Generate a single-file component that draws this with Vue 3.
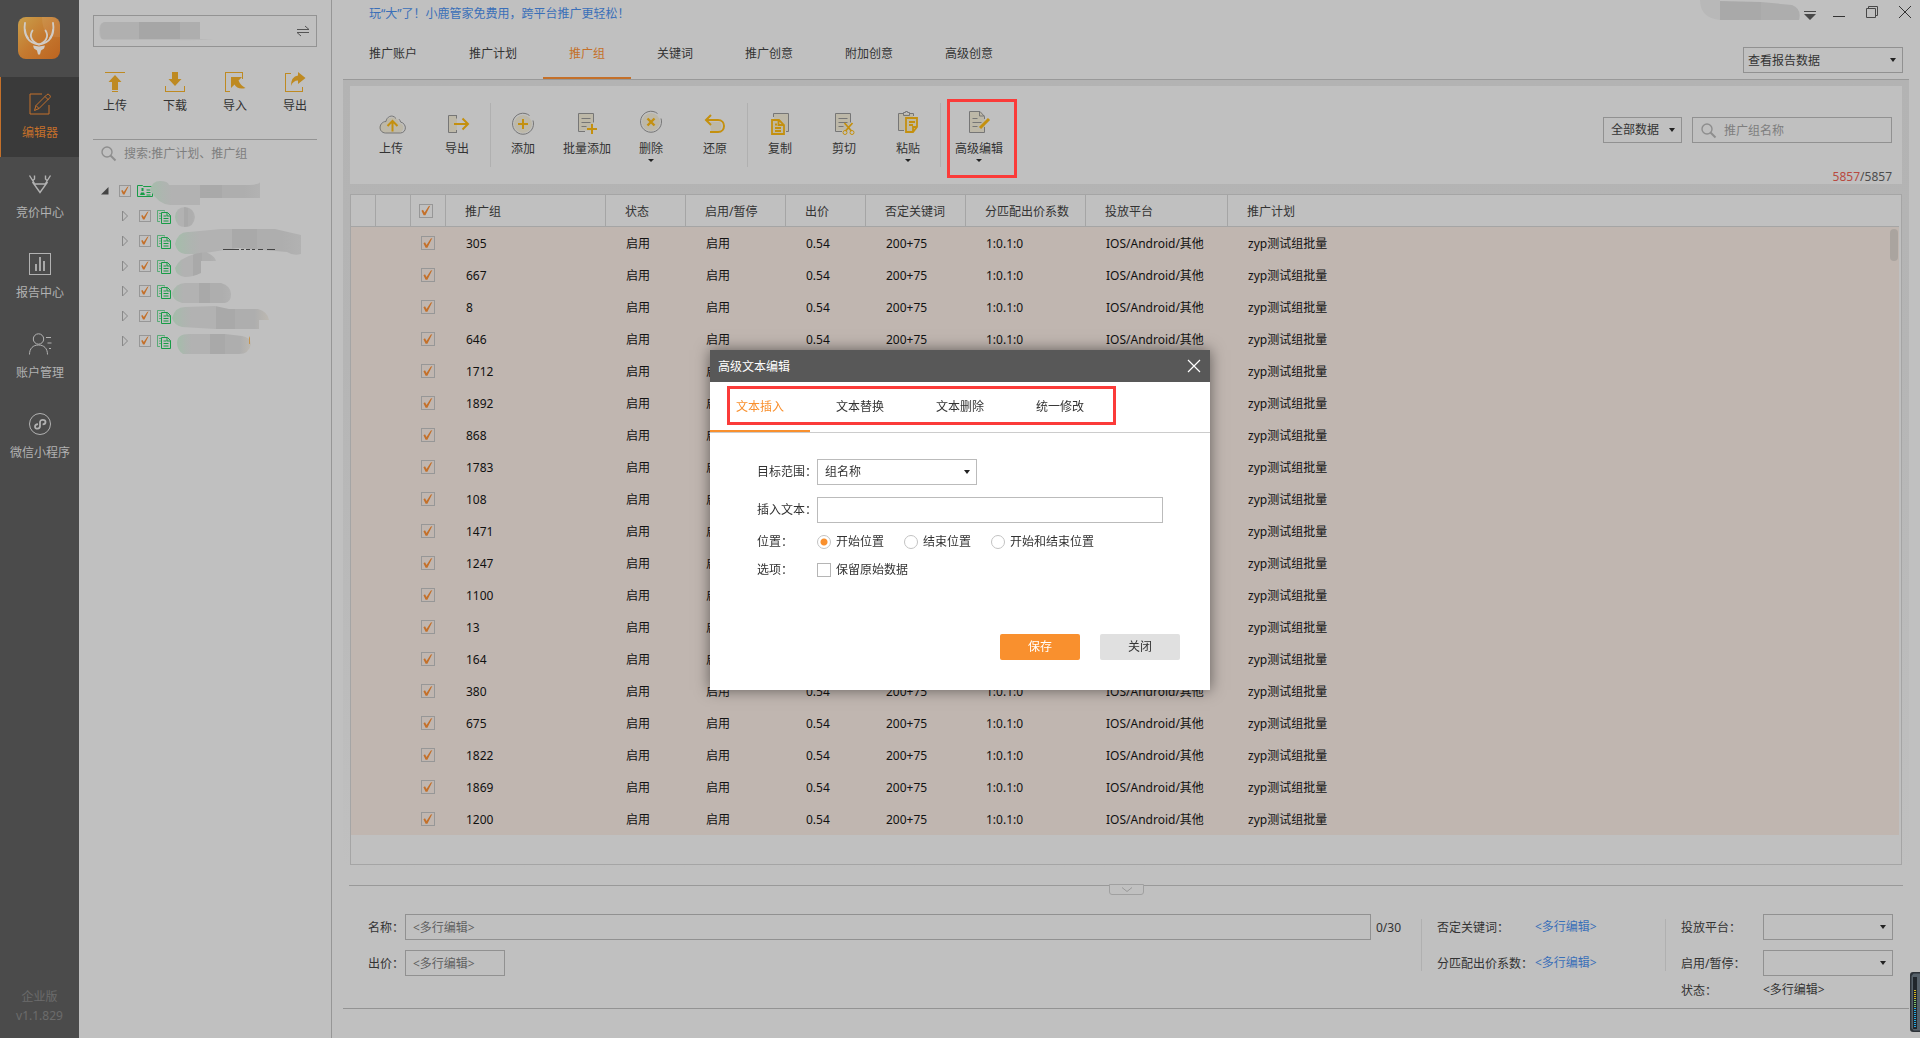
<script setup>
import { ref } from 'vue'

const railItems = [
  { label: '编辑器', active: true, icon: '<path d="M14 2H2v20h19v-9"/><path d="M6.500 18.500l1.500-5L19 2.500q1-1 2.500 0.500t0.500 2.500L11 16.500z M17 4.500l3.500 3.500 M8 13.500l3 3"/>' },
  { label: '竞价中心', icon: '<path d="M4.500 10L12 20.500 19.500 10M6.500 12h11M1.500 3.500L6.500 11.500M6.500 3.500v3.500l-2 2M22.500 3.500L17.500 11.500M17.500 3.500v3.500l2 2" stroke-width="1.400"/>' },
  { label: '报告中心', icon: '<rect x="1.500" y="1.500" width="21" height="21"/><path d="M8 19v-7M12 19V5M16 19V9" stroke-width="1.800"/>' },
  { label: '账户管理', icon: '<circle cx="10.500" cy="7" r="5.200"/><path d="M1.500 22.500c0-6 3.500-9.500 9-9.500s9 3.500 9 9.500M18 5.500h5M19.500 11h4M21 16.500h2"/>' },
  { label: '微信小程序', icon: '<circle cx="12" cy="12" r="10.500"/><path d="M10 12.200c-2 .2-3 1.200-3 2.500 0 2.700 5 2.900 5-.7V10.300c0-3.600 5.500-3 5.500-.3 0 1.500-1.200 2.300-2.900 2.300" stroke-width="1.800"/>' }
]

const sideActions = [
  { label: '上传', icon: '<path d="M2 0h20v1H2zM12 3l6.500 7H15v8H9v-8H5.500zM9 19h6v1H9z"/>' },
  { label: '下载', icon: '<path d="M9 0h6v7h3.500L12 14 5.500 7H9zM2 14h1v5h18v-5h1v6H2z"/>' },
  { label: '导入', icon: '<path d="M2 0h18v7h-1V1H3v18h4v1H2zM8 5h11l-3.500 3.500q2 5 7 7.500-8 2-11-3.500L8 16z"/>' },
  { label: '导出', icon: '<path d="M2 1h6v1H3v17h16v-4h1v5H2zM15 0l7.500 6L15 12V8.500q-5 0-7 5.500 0-9.500 7-10.500z"/>' }
]

const tabs = ['推广账户', '推广计划', '推广组', '关键词', '推广创意', '附加创意', '高级创意']

const paper = '<path d="M5 2.500h15v17H5z" fill="#bdb8a8" stroke="none"/><path d="M12 20.500H5.500V2.500h15v9M8.500 7.500h9M8.500 11.500h9M8.500 15.500h5"/>'
const toolGroups = [
  [
    { label: '上传', icon: '<path d="M9 22c-9-1-8-10-1-11 2-6 13-6 14 1 7 1 5 10-1 10z" fill="#bdb8a8" stroke="none"/><path d="M19 7.500C15 2.500 9.500 6 9 10.500c-7 0-8.500 11-.5 11.500h15c6.500-.5 6.500-9.500 0-11-.2-1.200-.7-2-1.500-2.800"/><path class="gold" d="M15.500 20.500V10M10.500 15l5-5 5 5" stroke-width="2"/>' },
    { label: '导出', icon: '<path d="M6 5h8v16H6z" fill="#bdb8a8" stroke="none"/><path d="M14 4.500H5.500v17H14M13.500 4.500v3M13.500 19v2.500"/><path class="gold" d="M11 13h14M19.500 7.500L25 13l-5.500 5.500" stroke-width="2"/>' }
  ],
  [
    { label: '添加', icon: '<circle cx="14" cy="13" r="9" fill="#bdb8a8" stroke="none"/><path d="M20.500 4.500A10.500 10.500 0 1 0 24 9.500"/><path class="gold" d="M9 13h10M14 8v10" stroke-width="2"/>' },
    { label: '批量添加', icon: paper + '<path class="gold" d="M14 18h10M19 13v10" stroke-width="2"/>' },
    { label: '删除', caret: true, icon: '<circle cx="14" cy="11" r="9" fill="#bdb8a8" stroke="none"/><path d="M20.500 2.500A10.500 10.500 0 1 0 24 7.500"/><path class="gold" d="M10.500 7.500l7 7M17.500 7.500l-7 7" stroke-width="2.400"/>' },
    { label: '还原', icon: '<path d="M9 11h10q3 3 0 9h-9z" fill="#bdb8a8" stroke="none"/><path class="gold" d="M10 4L5 9l5 5M5.500 9H17c8 0 8 12 0 12H9" stroke-width="2"/>' }
  ],
  [
    { label: '复制', icon: '<path d="M8 3h14v17H8z" fill="#bdb8a8" stroke="none"/><path d="M7.500 6V2.500h15v18H20"/><path class="gold" d="M6 9h7l5 5v9H6zM12.500 9v5H18M9 13.500h2M9 17h6M9 20h6" stroke-width="1.800" fill="#c0b9a0"/>' },
    { label: '剪切', icon: paper + '<path class="gold" d="M14.500 12l7 8M22.500 12l-7 8" stroke-width="1.800"/><circle class="gold" cx="15" cy="21.500" r="2"/><circle class="gold" cx="22" cy="21.500" r="2"/>' },
    { label: '粘贴', caret: true, icon: '<path d="M5 3h14v16H5z" fill="#bdb8a8" stroke="none"/><path d="M10 19.500H4.500v-17H9M15 2.500h4.500V5M9.500 1.500h2v-1h2v1h2v3h-6z"/><path class="gold" d="M12 7h11v9l-4 5h-7zM15 11h6M15 14h4M19 20v-4h4" stroke-width="1.800" fill="#c0b9a0"/>' }
  ],
  [
    { label: '高级编辑', caret: true, marked: true, icon: '<path d="M4 1h12l4 5v15H4z" fill="#bdb8a8" stroke="none"/><path d="M19.500 16v5.500h-15v-21H15l4.500 5V8M14.500.5V5h5M7.500 7.500h5M7.500 11.500h9M7.500 15.500h5"/><path class="gold" d="M15 17l9-9" stroke-width="3"/>' }
  ]
]

// Masked names in the account tree, drawn as blocks
const tree = [
  { d: 'M0 8q2-9 10-9 8 0 9 4h81q10-1 10-3v16H50v7H20q-12-1-20-15z', w: 112 },
  { d: 'M0 10q1-10 10-10 9 1 10 10-1 10-10 10Q1 20 0 10z', w: 22 },
  { d: 'M0 12Q3-1 14 0L46-3h54l26 6v19q-8 2-14-2l-50-4-38 6H10Q2 21 0 12z', w: 127 },
  { d: 'M0 11Q5-2 31-5q9 4 10 9H26v12q-8 4-16 4Q1 19 0 11z', w: 42 },
  { d: 'M-3 11Q1 1 10 1h36q10 3 10 11t-6 9H7q-10-3-10-10z', w: 57 },
  { d: 'M-3 11Q0 0 10 0l30-1 14 3h29q10 3 11 11H84v9H40L7 20Q-1 18-3 11z', w: 95 },
  { d: 'M2 11Q2 2 14 2h36l17 2q8 1 9 8-2 10-12 10H8Q2 18 2 11z', w: 78 }
]

const headers = ['推广组', '状态', '启用/暂停', '出价', '否定关键词', '分匹配出价系数', '投放平台', '推广计划']
const widths = [25, 35, 35, 160, 80, 100, 80, 100, 120, 142]
const names = ['305', '667', '8', '646', '1712', '1892', '868', '1783', '108', '1471', '1247', '1100', '13', '164', '380', '675', '1822', '1869', '1200']
const rest = ['启用', '启用', '0.54', '200+75', '1:0.1:0', 'IOS/Android/其他', 'zyp测试组批量']

const modalTabs = ['文本插入', '文本替换', '文本删除', '统一修改']
const positions = ['开始位置', '结束位置', '开始和结束位置']
const position = ref('开始位置')
const keyword = ref('')
const treeKeyword = ref('')
const insertText = ref('')
const groupName = ref('')
const bid = ref('')
</script>

<template>
  <div class="app">
    <nav class="rail">
      <svg class="logo" viewBox="0 0 42 42" width="42" height="42" aria-hidden="true">
        <defs>
          <linearGradient id="logoFill" x1="0" y1="0" x2="1" y2="1">
            <stop offset="0" stop-color="#c9a04c" />
            <stop offset=".5" stop-color="#c57a30" />
            <stop offset="1" stop-color="#bc6420" />
          </linearGradient>
        </defs>
        <rect width="42" height="42" rx="8" fill="url(#logoFill)" />
        <path d="M24 0h10q8 0 8 8v12Q24 22 24 0z" fill="#fff" opacity=".08" />
        <g fill="none" stroke="#d0cbc5" stroke-width="1.800" stroke-linecap="round">
          <path d="M7 6C5 18 10 26 21 27.500 32 26 37 18 35 6" />
          <path d="M14.500 13.500c-4 6 0 12 6.500 14 6.500-2 10.500-8 6.500-14" />
          <path d="M7 13q0 4 3 8M35 13q0 4-3 8" />
        </g>
        <path d="M15 28.500l6 1 6-1-1 3-3 2-1 4h-2l-1-4-3-2z" fill="#d0cbc5" />
      </svg>
      <a v-for="item in railItems" :key="item.label" href="#" class="rail-item" :class="{ active: item.active }">
        <svg width="24" height="24" viewBox="0 0 24 24" fill="none" stroke="currentColor" v-html="item.icon"></svg>
        <span>{{ item.label }}</span>
      </a>
      <div class="version"><span>企业版</span><span>v1.1.829</span></div>
    </nav>

    <aside class="side">
      <button class="account" type="button" aria-label="切换账户">
        <svg width="116" height="20" viewBox="0 0 116 20">
          <path d="M0 10q0-8 5-9h96v17h14q-20 2-40 1H5q-5-1-5-9z" fill="#b8b8b8" />
          <path d="M1 8q0-6 5-7h34v17H3q-2-2-2-10z" fill="#b0b0b0" /><path d="M40 1h41v17H40z" fill="#a6a6a6" /><path d="M81 1h20v17H81z" fill="#aeaeae" />
        </svg>
        <svg width="14" height="12" viewBox="0 0 14 12" fill="none" stroke="#555"><path d="M1 4.500h12L9 1M13 7.500H1L5 11" /></svg>
      </button>
      <div class="side-actions">
        <button v-for="a in sideActions" :key="a.label" type="button">
          <svg width="24" height="20" viewBox="0 0 24 20" fill="#be8a22" v-html="a.icon"></svg>
          <span>{{ a.label }}</span>
        </button>
      </div>
      <label class="side-search">
        <svg width="15" height="15" viewBox="0 0 15 15" fill="none" stroke="#8e8e8e" stroke-width="1.400"><circle cx="6" cy="6" r="5" /><path d="M9.500 9.500l5 5" stroke-width="2" /></svg>
        <input v-model="treeKeyword" type="text" placeholder="搜索:推广计划、推广组" aria-label="搜索" />
      </label>
      <ul class="tree">
        <li v-for="(n, i) in tree" :key="i" :class="{ root: i === 0 }">
          <svg v-if="i === 0" class="twisty" width="8" height="8" viewBox="0 0 8 8"><path d="M7.500 0v7.500H0z" fill="#444" /></svg>
          <svg v-else class="twisty" width="8" height="12" viewBox="0 0 8 12"><path d="M1.500 1v10L6.500 6z" fill="none" stroke="#888" /></svg>
          <input class="check small" type="checkbox" checked aria-label="选择" />
          <svg v-if="i === 0" class="node" width="16" height="14" viewBox="0 0 16 14" fill="none" stroke="#169c46"><path d="M.5 1.500h5l1 1h9v10H.5z" /><path d="M9.500 6h4M9.500 8.500h4M9.500 11h4" /><path d="M3 11h5L7 8.500H4zM4.500 4h2v3h-2z" fill="#169c46" stroke="none" /></svg>
          <svg v-else class="node" width="14" height="14" viewBox="0 0 14 14" fill="none" stroke="#169c46"><path d="M3 11.500H.5V.5h7v1M2 3.500h2M2 6h2M2 8.500h2" opacity=".6" /><path d="M4.500 2.500h6l3 3v8h-9zM6.500 6h3M6.500 8.500h5M6.500 11h5" /><path d="M10 2.500v3.500h3.500" /></svg>
          <svg class="mask" :width="n.w" height="20" :viewBox="`0 0 ${n.w} 20`">
            <defs>
              <linearGradient :id="'mask' + i" x1="0" x2="1">
                <stop offset="0" stop-color="#a4bdaa" /><stop offset=".12" stop-color="#aeb5b0" />
                <stop offset=".2" stop-color="#b2b2b2" /><stop offset=".45" stop-color="#b2b2b2" />
                <stop offset=".45" stop-color="#a9a9a9" /><stop offset=".65" stop-color="#a9a9a9" />
                <stop offset=".65" stop-color="#aeaeae" /><stop offset=".85" stop-color="#aeaeae" />
                <stop offset="1" :stop-color="i > 4 ? '#bdb9b2' : '#b2b2b2'" />
              </linearGradient>
            </defs>
            <path :d="n.d" :fill="`url(#mask${i})`" />
            <path v-if="i === 6" d="M74 4l1 2v6h-1z" fill="#c4924c" />
            <path v-if="i === 2" d="M48 17.500h16M66 17.500h3M71 17.500h4M77 17.500h3M83 17.500h5M92 17.500h8" stroke="#444" fill="none" />
          </svg>
        </li>
      </ul>
    </aside>

    <main class="main">
      <div class="titlebar">
        <a href="#" class="promo">玩“大”了！小鹿管家免费用，跨平台推广更轻松！</a>
        <svg class="user" width="101" height="20" viewBox="0 0 101 20"><path d="M0 0h20v20Q0 18 0 0z" fill="#b8b8b8" /><path d="M20 1l41 1v18H20z" fill="#a9a9a9" /><path d="M61 2l31 3q10 4 7 15H61z" fill="#adadad" /></svg>
        <div class="window-buttons">
          <button type="button" aria-label="菜单"><svg width="12" height="14" viewBox="0 0 12 14"><path d="M0 6h12v1H0zM0 9h12l-6 6z" fill="#484848" /></svg></button>
          <button type="button" aria-label="最小化"><svg width="12" height="14" viewBox="0 0 12 14"><path d="M0 11h12v1H0z" fill="#333" /></svg></button>
          <button type="button" aria-label="还原窗口"><svg width="12" height="14" viewBox="0 0 12 14" fill="none" stroke="#484848"><path d="M.5 3.500h9v9h-9zM2.500 3V1.500h9v9H10" /></svg></button>
          <button type="button" aria-label="关闭窗口"><svg width="12" height="14" viewBox="0 0 12 14" stroke="#333"><path d="M0 1l12 12M12 1L0 13" /></svg></button>
        </div>
      </div>

      <div class="tabs">
        <a v-for="t in tabs" :key="t" href="#" :class="{ active: t === '推广组' }">{{ t }}</a>
        <span class="select report">
          <select aria-label="报告数据"><option>查看报告数据</option></select>
          <i></i>
        </span>
      </div>

      <div class="workspace">
        <section class="toolbar">
          <div v-for="(g, gi) in toolGroups" :key="gi" class="group">
            <button v-for="t in g" :key="t.label" type="button" :class="{ marked: t.marked }">
              <svg class="tool-icon" width="28" height="24" viewBox="0 0 28 24" fill="none" stroke="#767676" v-html="t.icon"></svg>
              <span>{{ t.label }}</span>
              <i v-if="t.caret" class="caret"></i>
            </button>
          </div>
          <div class="filters">
            <div class="filter-row">
              <span class="select scope"><select aria-label="数据范围"><option>全部数据</option></select><i></i></span>
              <label class="find">
                <svg width="15" height="15" viewBox="0 0 15 15" fill="none" stroke="#8e8e8e" stroke-width="1.400"><circle cx="6" cy="6" r="5" /><path d="M9.500 9.500l5 5" stroke-width="2" /></svg>
                <input v-model="keyword" type="text" placeholder="推广组名称" aria-label="推广组名称" />
              </label>
            </div>
            <p class="count"><b>5857</b>/5857</p>
          </div>
        </section>

        <section class="grid">
          <table>
            <colgroup>
              <col v-for="(w, i) in widths" :key="i" :style="{ width: w + 'px' }" />
              <col />
            </colgroup>
            <thead>
              <tr>
                <th></th><th></th>
                <th class="tick"><input class="check" type="checkbox" checked aria-label="全选" /></th>
                <th v-for="h in headers" :key="h">{{ h }}</th>
              </tr>
            </thead>
            <tbody>
              <tr v-for="n in names" :key="n">
                <td></td><td></td>
                <td class="tick"><input class="check" type="checkbox" checked :aria-label="'选择 ' + n" /></td>
                <td>{{ n }}</td>
                <td v-for="(c, i) in rest" :key="i">{{ c }}</td>
              </tr>
            </tbody>
          </table>
          <span class="thumb"></span>
        </section>

        <section class="detail">
          <button class="fold" type="button" aria-label="收起"><svg width="12" height="6" viewBox="0 0 12 6" fill="none" stroke="#999"><path d="M1 .5l5 4 5-4" /></svg></button>
          <div class="fields grow">
            <div class="row"><label for="gname">名称：</label><input id="gname" v-model="groupName" class="box wide" type="text" placeholder="&lt;多行编辑&gt;" /><span class="len">0/30</span></div>
            <div class="row"><label for="bid">出价：</label><input id="bid" v-model="bid" class="box bid" type="text" placeholder="&lt;多行编辑&gt;" /></div>
          </div>
          <div class="sep"></div>
          <div class="fields mid">
            <div class="row"><span class="name">否定关键词：</span><a href="#">&lt;多行编辑&gt;</a></div>
            <div class="row"><span class="name">分匹配出价系数：</span><a href="#">&lt;多行编辑&gt;</a></div>
          </div>
          <div class="sep"></div>
          <div class="fields last">
            <div class="row"><label for="plat" class="name">投放平台：</label><span class="select"><select id="plat"><option></option></select><i></i></span></div>
            <div class="row"><label for="onoff" class="name">启用/暂停：</label><span class="select"><select id="onoff"><option></option></select><i></i></span></div>
            <div class="row state"><span class="name">状态：</span><span>&lt;多行编辑&gt;</span></div>
          </div>
        </section>
      </div>
      <footer class="foot"></footer>
    </main>

    <svg class="meter" width="10" height="60" viewBox="0 0 10 60" aria-hidden="true">
      <path d="M10 0H3Q0 0 0 3v54q0 3 3 3h7z" fill="#2c3238" /><path d="M10 1.500H3.500L1.500 4v52l2 2.500H10z" fill="#56616a" />
      <rect x="3" y="5" width="4" height="52" fill="#20262c" />
      <path d="M5 18v10" stroke="#d8b820" stroke-width="2" stroke-dasharray="1 1" />
      <path d="M5 28v7" stroke="#7fc26a" stroke-width="2" stroke-dasharray="1 1" />
      <path d="M5 36v20" stroke="#28a8e0" stroke-width="2" stroke-dasharray="1 1" />
    </svg>

    <div class="overlay">
      <form class="modal" role="dialog" aria-label="高级文本编辑" @submit.prevent>
        <header>
          <h2>高级文本编辑</h2>
          <button type="button" aria-label="关闭对话框"><svg width="14" height="14" viewBox="0 0 14 14" stroke="#fff" stroke-width="1.200"><path d="M1 1l12 12M13 1L1 13" /></svg></button>
        </header>
        <div class="modal-tabs">
          <a v-for="(t, i) in modalTabs" :key="t" href="#" :class="{ active: i === 0 }">{{ t }}</a>
          <span class="frame"></span>
        </div>
        <div class="modal-body">
          <div class="line"><label for="target">目标范围：</label><span class="select"><select id="target"><option>组名称</option></select><i></i></span></div>
          <div class="line"><label for="ins">插入文本：</label><input id="ins" v-model="insertText" class="text" type="text" /></div>
          <div class="line short">
            <span class="cap">位置：</span>
            <label v-for="p in positions" :key="p" class="opt"><input v-model="position" type="radio" name="pos" :value="p" />{{ p }}</label>
          </div>
          <div class="line short"><span class="cap">选项：</span><label class="opt"><input class="check" type="checkbox" />保留原始数据</label></div>
        </div>
        <div class="modal-foot"><button class="save" type="submit">保存</button><button class="close" type="button">关闭</button></div>
      </form>
    </div>
  </div>
</template>

<style>
body { background: #c0c0c0; }
.gold { stroke: #c4900f; }
</style>

<style scoped>
.app, .app * { box-sizing: border-box; }
.app {
  display: flex;
  min-height: 100vh;
  background: #c0c0c0;
  color: #333;
  font: 12px/16px "Noto Sans", "Noto Sans CJK SC", sans-serif;
}
button, input, select { font: inherit; color: inherit; margin: 0; }
button { border: 0; padding: 0; background: none; }
input[type="text"] { border: 0; padding: 0; background: none; outline: 0; min-width: 0; }
input::placeholder { color: #7e7e7e; opacity: 1; }
a { text-decoration: none; color: inherit; }
svg { display: block; flex: none; overflow: visible; }

/* check marks and drop-downs */
.check {
  appearance: none;
  display: block;
  flex: none;
  width: 14px;
  height: 14px;
  border: 1px solid #979797;
}
.check:checked::before {
  content: "";
  display: block;
  width: 12px;
  height: 12px;
  background: #c4702a;
  clip-path: polygon(12% 52%, 25% 44%, 38% 66%, 72% 14%, 86% 8%, 45% 90%, 30% 90%);
}
.check.small { width: 12px; height: 12px; }
.check.small:checked::before { width: 10px; height: 10px; }
.select { position: relative; display: block; height: 26px; flex: none; }
.select select {
  appearance: none;
  display: block;
  width: 100%;
  height: 100%;
  padding: 1px 4px 0;
  border: 1px solid #919191;
  border-radius: 0;
  background: none;
}
.select i {
  position: absolute;
  right: 7px;
  top: 11px;
  border: 3px solid transparent;
  border-top: 4px solid #222;
  border-bottom: 0;
  pointer-events: none;
}

/* left rail */
.rail {
  width: 79px;
  flex: none;
  display: flex;
  flex-direction: column;
  background: #4b4b4b;
  color: #b2b2b2;
}
.logo { margin: 17px 18px 18px; }
.rail-item {
  height: 80px;
  padding-top: 15px;
  display: flex;
  flex-direction: column;
  align-items: center;
  gap: 9px;
  border-left: 1px solid transparent;
}
.rail-item.active { background: #3a3a3a; color: #c4702a; border-color: #c4702a; }
.version {
  margin-top: auto;
  padding-bottom: 14px;
  display: flex;
  flex-direction: column;
  align-items: center;
  gap: 3px;
  color: #6c6c6c;
}

/* account side bar */
.side { width: 253px; flex: none; padding: 15px 14px 0; border-right: 1px solid #969696; }
.account {
  width: 100%;
  height: 32px;
  padding: 0 6px 0 5px;
  display: flex;
  align-items: center;
  justify-content: space-between;
  border: 1px solid #939393;
}
.side-actions {
  display: flex;
  justify-content: space-between;
  padding: 25px 10px;
  border-bottom: 1px solid #939393;
}
.side-actions button { display: flex; flex-direction: column; align-items: center; gap: 6px; }
.side-search { display: flex; align-items: center; gap: 8px; height: 27px; padding-left: 8px; }
.side-search input { flex: 1; }
.tree { list-style: none; margin: 11px 0 0; padding: 0; }
.tree li { display: flex; align-items: center; height: 25px; padding-left: 28px; }
.tree li.root { padding-left: 8px; }
.twisty { width: 8px; margin-right: 10px; }
.node { margin: 2px 4px 0 6px; }
.root .node { margin: 0 -3px 0 6px; }
.mask { margin-top: 2px; }

/* main column */
.main { flex: 1; min-width: 0; display: flex; flex-direction: column; }
.titlebar { display: flex; align-items: flex-start; height: 26px; padding: 0 9px 0 37px; }
.promo { flex: 1; padding-top: 6px; color: #3a6fb8; }
.window-buttons { display: flex; gap: 21px; padding: 5px 0 0 3px; }
.window-buttons button:first-child { margin-right: -4px; }
.tabs {
  display: flex;
  height: 54px;
  margin: 0 11px;
  border-bottom: 1px solid #999;
}
.tabs a { padding: 20px 26px 0; border-bottom: 2px solid transparent; }
.tabs a.active { color: #c4702a; border-color: #c4702a; }
.report { width: 160px; margin: 21px 6px 0 auto; }
.workspace {
  flex: 1;
  display: flex;
  flex-direction: column;
  margin: 0 11px;
  padding: 6px 7px 0;
  background: linear-gradient(#b3b3b3, #b5b5b5 30%, #c0c0c0 85%);
}
.toolbar { display: flex; height: 98px; padding: 17px 10px 0 8px; background: #c0c0c0; }
.group { display: flex; height: 64px; border-right: 1px solid #b0b0b0; }
.group:nth-child(4) { border: 0; }
.group button {
  position: relative;
  display: flex;
  flex-direction: column;
  align-items: center;
  width: 64px;
  padding-top: 8px;
}
.group:first-child button { width: 66px; }
.group .marked { width: 76px; }
.group span { margin-top: 6px; }
.caret { margin-top: 2px; border: 3px solid transparent; border-top-color: #222; border-bottom: 0; }
.marked::after {
  content: "";
  position: absolute;
  inset: -4px 0 -11px 6px;
  border: 3px solid #fb3b39;
}
.filters { margin-left: auto; padding-top: 14px; }
.filter-row { display: flex; gap: 10px; }
.scope { width: 79px; }
.scope select { padding: 0 7px; }
.find { display: flex; align-items: center; gap: 8px; width: 200px; height: 26px; padding-left: 8px; border: 1px solid #919191; }
.find input { flex: 1; padding-top: 1px; }
.count { margin: 27px 0 0; text-align: right; line-height: 14px; color: #4c4c4c; }
.count b { font-weight: 400; color: #b84a40; }

.grid {
  position: relative;
  flex: 1;
  min-height: 600px;
  margin-top: 10px;
  padding-right: 2px;
  border: 1px solid #a5a5a5;
  background: #c0c0c0;
}
table { width: 100%; table-layout: fixed; border-collapse: separate; border-spacing: 0; }
th, td { height: 32px; padding: 2px 0 0 20px; text-align: left; font-weight: 400; white-space: nowrap; }
th { padding-left: 19px; border: solid #a5a5a5; border-width: 0 1px 1px 0; }
th:last-child { border-right: 0; }
td { background: #c0b6b0; color: #111; }
th.tick { padding: 0 0 0 8px; }
td.tick { padding: 0 0 0 10px; }
.thumb { position: absolute; right: 3px; top: 34px; width: 8px; height: 32px; border-radius: 4px; background: #aaa49f; }

/* multi-row editor */
.detail {
  position: relative;
  display: flex;
  margin: 20px -1px 0;
  padding: 28px 10px 10px 19px;
  border-top: 1px solid #999;
  background: #c0c0c0;
}
.fold {
  position: absolute;
  left: calc(50% - 17px);
  top: -2px;
  width: 35px;
  height: 11px;
  display: flex;
  align-items: center;
  justify-content: center;
  border: 1px solid #a0a0a0;
  border-radius: 0 0 3px 3px;
  background: #c0c0c0;
}
.fields { display: flex; flex-direction: column; gap: 10px; }
.grow { flex: 1; min-width: 0; }
.row { display: flex; align-items: center; height: 26px; }
.row label, .row .name, .len { padding-top: 2px; }
.row label:not(.name) { width: 37px; white-space: nowrap; }
.row .box { height: 26px; padding: 0 7px; border: 1px solid #919191; }
.row .box::placeholder { color: #606060; }
.row .wide { flex: 1; }
.row .bid { width: 100px; }
.len { width: 50px; padding-left: 5px; }
.sep { width: 1px; height: 52px; margin-top: 5px; background: #b0b0b0; }
.mid { width: 243px; padding-left: 15px; }
.mid .name { width: 98px; white-space: nowrap; }
.mid a { color: #3a6fb8; }
.last { width: 227px; padding-left: 15px; }
.last .name { width: 82px; }
.last .select { width: 130px; }
.last .state { height: 16px; margin-top: -4px; }
.foot { height: 30px; margin: 0 11px; border-top: 1px solid #939393; }
.meter { position: fixed; right: 0; bottom: 6px; }

/* dialog */
.overlay { position: fixed; inset: 0; padding-top: 2px; display: grid; place-items: center; }
.modal {
  display: flex;
  flex-direction: column;
  width: 500px;
  background: #fff;
  box-shadow: 0 0 14px rgba(0, 0, 0, .5);
}
.modal header {
  display: flex;
  align-items: center;
  justify-content: space-between;
  height: 32px;
  padding: 0 9px 0 8px;
  background: #585858;
  color: #fff;
}
.modal h2 { margin: 0; padding-top: 2px; font: inherit; }
.modal-tabs { position: relative; display: flex; height: 51px; border-bottom: 1px solid #ccc; }
.modal-tabs a { width: 100px; padding: 17px 26px 0; border-bottom: 2px solid transparent; }
.modal-tabs a.active { color: #f9902e; border-color: #f9902e; }
.frame { position: absolute; left: 17px; top: 4px; width: 389px; height: 39px; border: 3px solid #fb3b39; pointer-events: none; }
.modal-body { padding: 26px 47px 0; }
.line { display: flex; align-items: center; height: 26px; margin-bottom: 12px; }
.line > label:first-child, .cap { width: 60px; flex: none; white-space: nowrap; }
.line .select { width: 160px; }
.line select { border-color: #bbb; padding: 0 7px; }
.line .text { width: 346px; height: 26px; padding: 0 7px; border: 1px solid #bbb; }
.line.short { height: 14px; margin-bottom: 14px; }
.opt { display: flex; align-items: center; gap: 5px; margin-right: 20px; }
.opt .check { border-color: #b5b5b5; }
.opt input[type="radio"] {
  appearance: none;
  display: block;
  width: 14px;
  height: 14px;
  border: 1px solid #c2c2c2;
  border-radius: 50%;
}
.opt input[type="radio"]:checked { background: radial-gradient(circle, #f9902e 3px, transparent 4px); }
.modal-foot { display: flex; justify-content: flex-end; gap: 20px; padding: 43px 30px 30px; }
.modal-foot button { width: 80px; height: 26px; border-radius: 2px; }
.save { background: #f9902e; color: #fff; }
.close { background: #e0e0e0; }
</style>
